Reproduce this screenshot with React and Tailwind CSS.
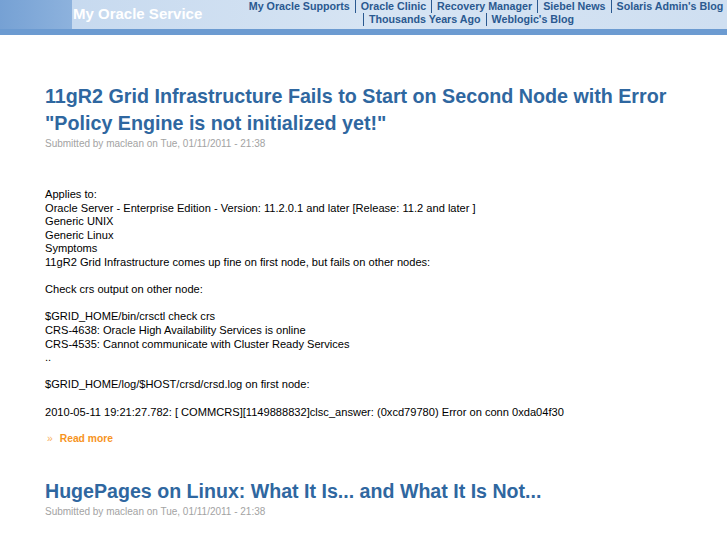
const NAV = [
  ["My Oracle Supports", "Oracle Clinic", "Recovery Manager", "Siebel News", "Solaris Admin's Blog"],
  ["Thousands Years Ago", "Weblogic's Blog"],
];

const BODY = [
  "Applies to:",
  "Oracle Server - Enterprise Edition - Version: 11.2.0.1 and later [Release: 11.2 and later ]",
  "Generic UNIX",
  "Generic Linux",
  "Symptoms",
  "11gR2 Grid Infrastructure comes up fine on first node, but fails on other nodes:",
  "",
  "Check crs output on other node:",
  "",
  "$GRID_HOME/bin/crsctl check crs",
  "CRS-4638: Oracle High Availability Services is online",
  "CRS-4535: Cannot communicate with Cluster Ready Services",
  "..",
  "",
  "$GRID_HOME/log/$HOST/crsd/crsd.log on first node:",
  "",
  "2010-05-11 19:21:27.782: [ COMMCRS][1149888832]clsc_answer: (0xcd79780) Error on conn 0xda04f30",
];

function Header() {
  return (
    <div className="h-[35px] bg-[#6c9bd1] flex flex-col">
      <div className="h-[29px] flex bg-gradient-to-r from-[#c3d7ee] via-[#d6e4f3] to-[#cfdff1]">
        <div className="w-[72px] shrink-0 bg-gradient-to-r from-[#76a1d4] to-[#8db2dd]" />
        <div className="w-[173px] shrink-0 whitespace-nowrap text-white font-bold text-[15px] leading-none pt-[6px] pl-[1px]">
          My Oracle Service
        </div>
        <div className="flex-1 min-w-0 whitespace-nowrap text-[10.7px] font-bold text-[#2a5990] leading-[13px]">
          {NAV.map((row, r) => (
            <div key={r} className={r === 0 ? "flex justify-center" : "flex justify-center pr-[30px]"}>
              {row.map((item, i) => (
                <span
                  key={item}
                  className={
                    i === 0 && r === 0
                      ? "px-[5px]"
                      : "px-[5px] border-l border-[#2a5990]"
                  }
                >
                  {item}
                </span>
              ))}
            </div>
          ))}
        </div>
      </div>
    </div>
  );
}

function Submitted() {
  return (
    <div className="mt-[1px] text-[10px] text-[#a3a3a3] leading-[12px]">
      Submitted by maclean on Tue, 01/11/2011 - 21:38
    </div>
  );
}

export default function App() {
  return (
    <div className="w-[727px] h-[545px] overflow-hidden bg-white font-['Liberation_Sans',Arial,sans-serif]">
      <Header />
      <div className="pl-[45px] pr-[20px]">
        <div className="pt-[48px]">
          <h2 className="text-[19.7px] font-bold leading-[27px] text-[#2f67a0]">
            11gR2 Grid Infrastructure Fails to Start on Second Node with Error
            <br />
            "Policy Engine is not initialized yet!"
          </h2>
          <Submitted />
          <div className="mt-[38px] text-[11.1px] leading-[13.6px] text-black">
            {BODY.map((line, i) => (
              <div key={i} className="h-[13.6px]">
                {line}
              </div>
            ))}
          </div>
          <div className="mt-[13px] text-[10.3px] leading-[13px] font-bold text-[#f7941d] flex gap-[7px]">
            <span className="font-normal text-[#f9b060] pl-[2px]">»</span>
            <span>Read more</span>
          </div>
        </div>
        <div className="pt-[33px]">
          <h2 className="text-[19.6px] font-bold leading-[27px] text-[#2f67a0]">
            HugePages on Linux: What It Is... and What It Is Not...
          </h2>
          <Submitted />
        </div>
      </div>
    </div>
  );
}
